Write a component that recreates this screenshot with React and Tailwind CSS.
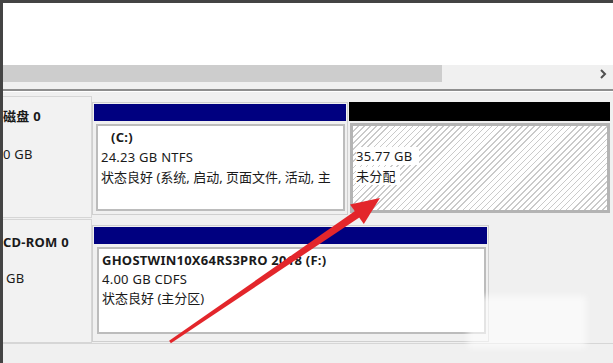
import React from 'react';

const font = { fontFamily: '"Noto Sans", "Noto Sans CJK SC", sans-serif' };

const hatch =
    'bg-[repeating-linear-gradient(135deg,#ffffff_0px,#ffffff_3.2px,#cacaca_3.2px,#cacaca_4.3px)]';

const Arrow = () => (
    <svg className="absolute left-0 top-0 pointer-events-none" width="613" height="363" viewBox="0 0 613 363">
        <polygon
            points="169.1,340.8 170.9,343.2 361.2,216.2 356.8,209.8"
            fill="#e3262b"
        />
        <polygon points="380,198 350,204.5 363.8,224" fill="#e3262b" />
    </svg>
);

const App = () => {
    return (
        <div
            className="relative w-[613px] h-[363px] overflow-hidden bg-[#444444] pl-[3px] pt-[3px] text-[13px] text-[#1a1a1a] tracking-[0.25px]"
            style={font}
        >
            <div className="flex flex-col h-full bg-[#f0f0f0] overflow-hidden">
                {/* white list area */}
                <div className="h-[62px] bg-white shrink-0" />

                {/* horizontal scrollbar */}
                <div className="h-[17px] shrink-0 flex items-stretch bg-[#f0f0f0]">
                    <div className="w-[439px] bg-[#cdcdcd]" />
                    <div className="flex-1" />
                    <div className="w-[14px] flex items-center justify-start">
                        <svg width="8" height="10" viewBox="0 0 8 10">
                            <path d="M2 1 L6 5 L2 9" fill="none" stroke="#505050" strokeWidth="2" />
                        </svg>
                    </div>
                </div>

                <div className="h-[7px] shrink-0" />
                <div className="h-[2px] shrink-0 bg-[#8e8e8e]" />
                <div className="h-[5px] shrink-0 border-t border-white" />

                {/* Disk 0 */}
                <div className="flex h-[122px] shrink-0">
                    <div className="w-[89px] shrink-0 border-t border-r border-b border-[#d6d6d6] bg-[#f2f2f2] overflow-hidden leading-[18px] pt-[10px]">
                        <div className="font-bold whitespace-nowrap">磁盘 0</div>
                        <div className="mt-[20px] whitespace-nowrap">0 GB</div>
                    </div>
                    <div className="flex pt-[6px] gap-[1px]">
                        <div className="w-[256px] h-[113px] border border-[#cfcfcf] p-[1px] flex flex-col">
                            <div className="h-[17px] bg-[#000080]" />
                            <div className="flex-1 mt-[3px] ml-[2px] mr-[1px] mb-[2px] border-2 border-[#bcbcbc] bg-white pl-[3px] pt-[1px] leading-[20px] whitespace-nowrap overflow-hidden">
                                <div className="font-bold pl-[10px]">(C:)</div>
                                <div>24.23 GB NTFS</div>
                                <div className="tracking-normal">状态良好 (系统, 启动, 页面文件, 活动, 主</div>
                            </div>
                        </div>
                        <div className="w-[261px] h-[113px] flex flex-col">
                            <div className="h-[19px] bg-black" />
                            <div className={`flex-1 mt-[2px] ml-[1px] mb-[2px] border-[3px] border-[#b4b4b4] ${hatch} pl-[3px] pt-[20px] leading-[20px]`}>
                                <div><span className="bg-white pr-[6px]">35.77 GB</span></div>
                                <div><span className="bg-white pr-[4px]">未分配</span></div>
                            </div>
                        </div>
                    </div>
                </div>

                {/* CD-ROM 0 */}
                <div className="flex h-[124px] shrink-0 mt-[1px]">
                    <div className="w-[89px] shrink-0 border-t border-r border-b border-[#d6d6d6] bg-[#f2f2f2] overflow-hidden leading-[18px] pt-[13px]">
                        <div className="font-bold whitespace-nowrap">CD-ROM 0</div>
                        <div className="mt-[18px] pl-[3px] whitespace-nowrap">GB</div>
                    </div>
                    <div className="flex pt-[6px]">
                        <div className="w-[397px] h-[117px] border border-[#cfcfcf] p-[1px] flex flex-col">
                            <div className="h-[17px] bg-[#000080]" />
                            <div className="flex-1 mt-[3px] ml-[3px] mr-[1px] mb-[6px] border-2 border-[#bcbcbc] bg-white pl-[3px] pt-[2px] leading-[19px] whitespace-nowrap overflow-hidden">
                                <div className="font-bold">GHOSTWIN10X64RS3PRO 2018 (F:)</div>
                                <div>4.00 GB CDFS</div>
                                <div className="tracking-normal">状态良好 (主分区)</div>
                            </div>
                        </div>
                    </div>
                </div>
                <div className="flex-1 border-t border-[#d6d6d6]" />
            </div>

            {/* faint watermark */}
            <div className="absolute left-[468px] top-[296px] w-[118px] h-[52px] bg-white/60 blur-[3px] pointer-events-none" />

            <Arrow />
        </div>
    );
};

export default App;
